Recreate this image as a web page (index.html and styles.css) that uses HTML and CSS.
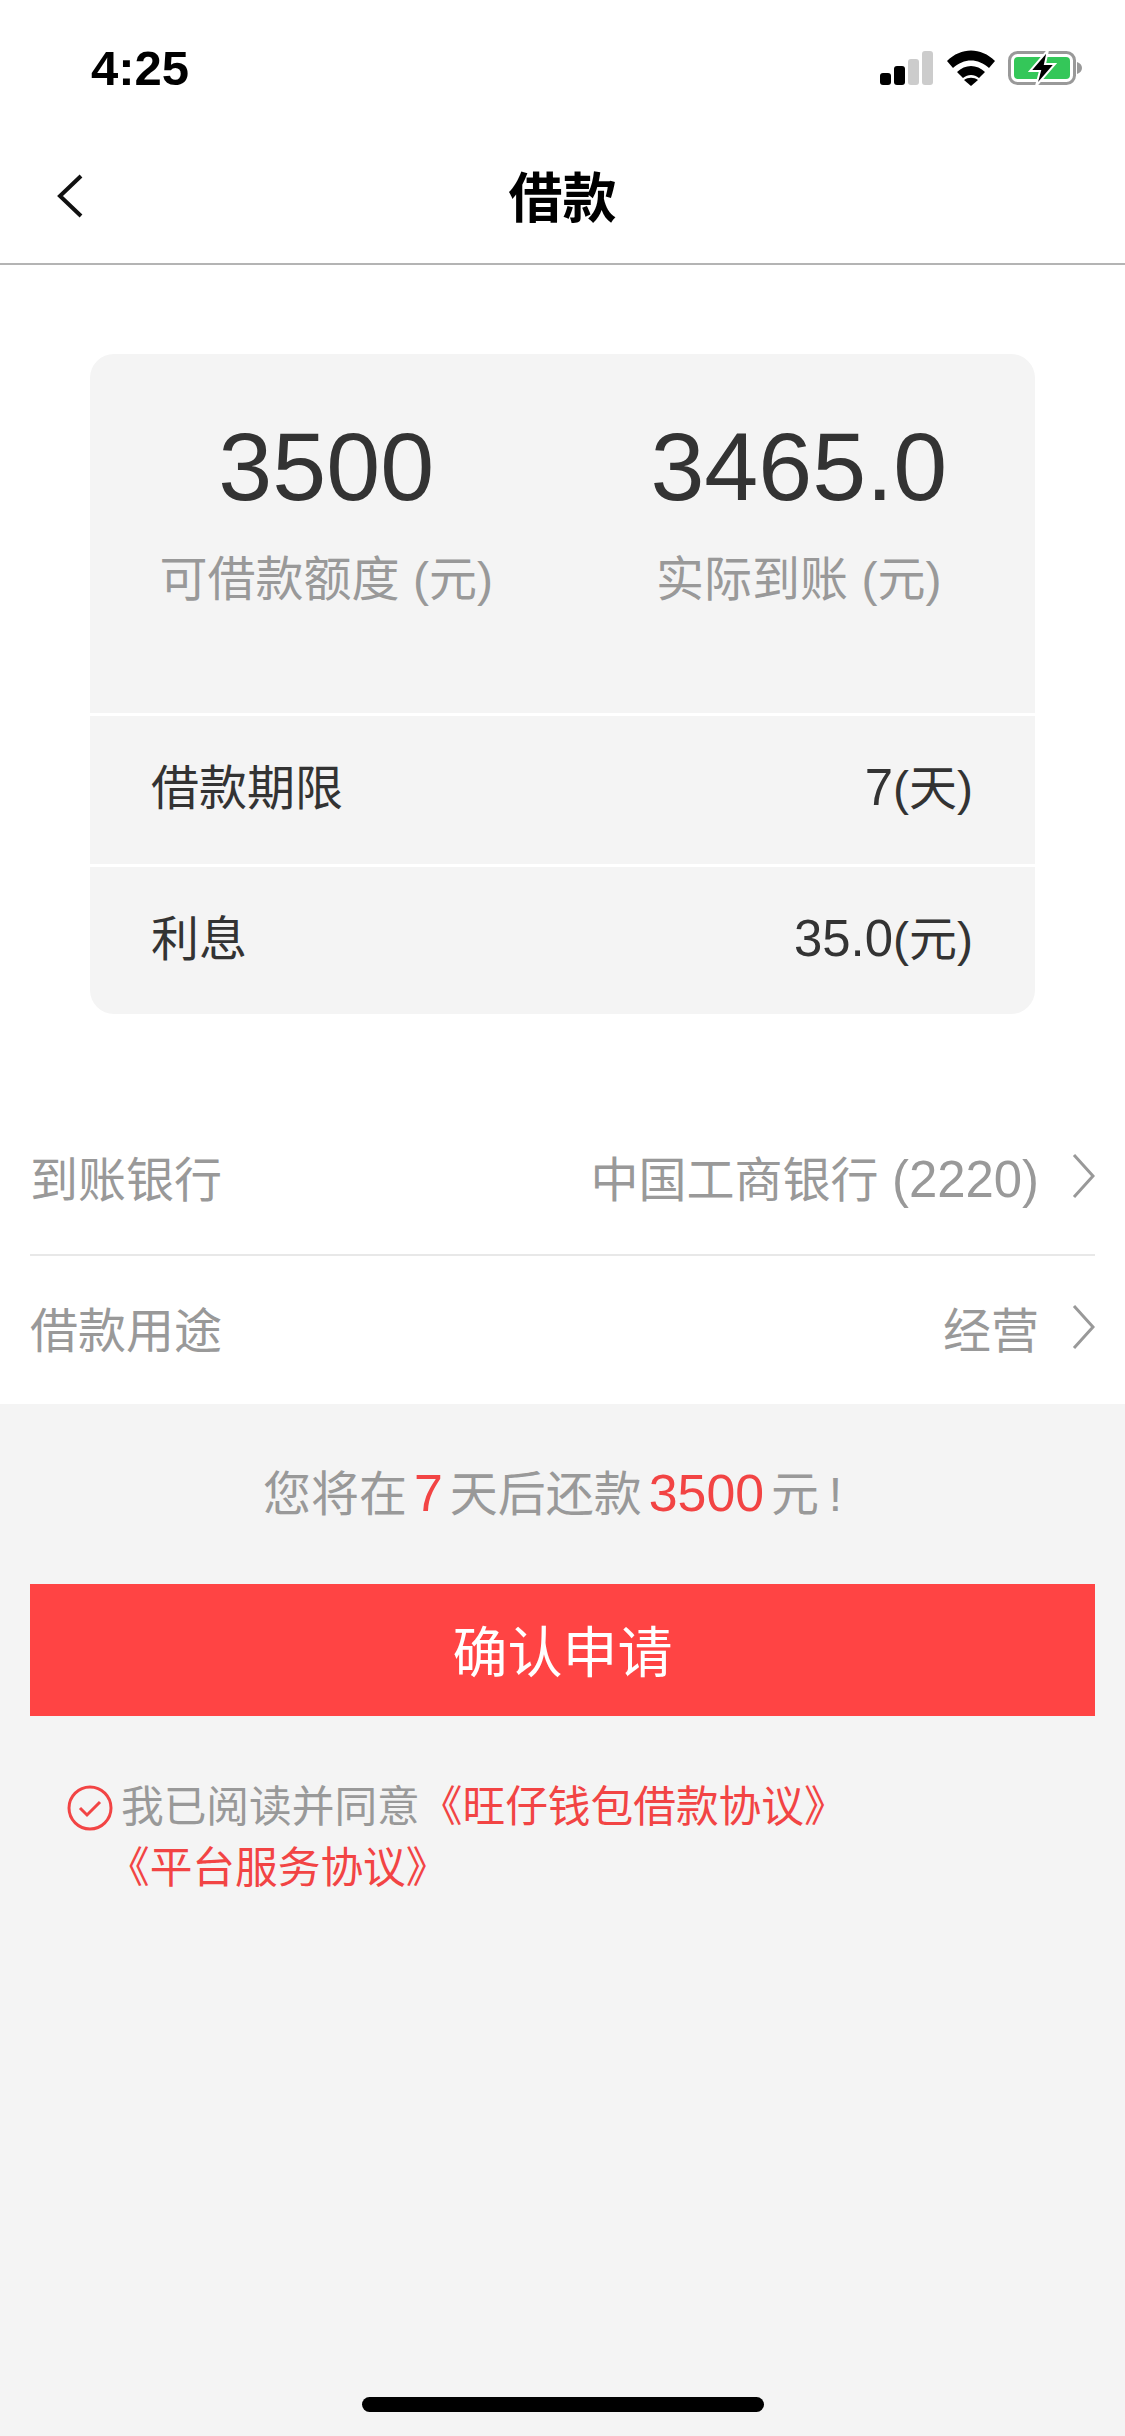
FILE: index.html
```html
<!DOCTYPE html>
<html lang="zh-CN">
<head>
    <meta charset="UTF-8">
    <meta name="viewport" content="width=device-width, initial-scale=1.0">
    <title>借款</title>
    <link rel="stylesheet" href="styles.css">
</head>
<body>

<div class="top">
    <div class="status-bar">
        <span class="time">4:25</span>
        <div class="status-icons">
            <svg class="signal" width="54" height="34" viewBox="0 0 54 34">
                <rect x="0" y="22" width="11" height="12" rx="3" fill="#000"/>
                <rect x="14" y="15" width="11" height="19" rx="3" fill="#000"/>
                <rect x="28" y="8" width="11" height="26" rx="3" fill="#ccc"/>
                <rect x="42" y="0" width="11" height="34" rx="3" fill="#ccc"/>
            </svg>
            <svg class="wifi" width="48" height="36" viewBox="0 0 48 36">
                <path d="M0 11 C14 -3 34 -3 48 11 L42 18 C31 8 17 8 6 18 Z" fill="#000"/>
                <path d="M10 22 C18 14 30 14 38 22 L32 28 C27 24 21 24 16 28 Z" fill="#000"/>
                <path d="M17 30 C21 27 27 27 31 30 L24 36 Z" fill="#000"/>
            </svg>
            <svg class="battery" width="74" height="36" viewBox="0 0 74 36">
                <rect x="1.5" y="2.5" width="65" height="31" rx="8" fill="none" stroke="#999" stroke-width="3"/>
                <rect x="6" y="7" width="56" height="22" rx="4" fill="#34c759"/>
                <path d="M69 12 C72 13 74 15 74 18 C74 21 72 23 69 24 Z" fill="#999"/>
                <path d="M40 0 L22 21 L32 21 L28 36 L47 14 L37 14 Z" fill="#000" stroke="#fff" stroke-width="2"/>
            </svg>
        </div>
    </div>
    <header class="nav">
        <svg class="back" width="28" height="44" viewBox="0 0 28 44">
            <path d="M25 2 L4 22 L25 42" fill="none" stroke="#111" stroke-width="4"/>
        </svg>
        <h1>借款</h1>
    </header>
</div>

<section class="panel">
    <div class="card">
        <div class="summary">
            <div class="stat">
                <div class="stat-num">3500</div>
                <div class="stat-label">可借款额度 (元)</div>
            </div>
            <div class="stat">
                <div class="stat-num">3465.0</div>
                <div class="stat-label">实际到账 (元)</div>
            </div>
        </div>
        <div class="card-row"><span>借款期限</span><span><span class="num">7</span>(天)</span></div>
        <div class="card-row"><span>利息</span><span><span class="num">35.0</span>(元)</span></div>
    </div>

    <div class="list">
        <div class="list-row">
            <span>到账银行</span>
            <span class="list-value">
                <span>中国工商银行 <span class="num">(2220)</span></span>
                <svg class="chevron" width="24" height="46" viewBox="0 0 24 46"><path d="M3 2 L22 23 L3 44" fill="none" stroke="#999" stroke-width="3"/></svg>
            </span>
        </div>
        <div class="list-row">
            <span>借款用途</span>
            <span class="list-value">
                <span>经营</span>
                <svg class="chevron" width="24" height="46" viewBox="0 0 24 46"><path d="M3 2 L22 23 L3 44" fill="none" stroke="#999" stroke-width="3"/></svg>
            </span>
        </div>
    </div>
</section>

<main class="apply">
    <p class="notice">您将在<em class="num">7</em>天后还款<em class="num">3500</em>元&#8201;!</p>
    <button class="confirm">确认申请</button>
    <div class="agree">
        <svg class="check" width="46" height="46" viewBox="0 0 46 46">
            <circle cx="23" cy="23" r="21" fill="none" stroke="#f24444" stroke-width="3"/>
            <path d="M13 23 L20 30 L33 17" fill="none" stroke="#f24444" stroke-width="3"/>
        </svg>
        <p>我已阅读并同意<a href="#">《旺仔钱包借款协议》</a><br><a class="second" href="#">《平台服务协议》</a></p>
    </div>
</main>

<div class="home-bar"></div>

</body>
</html>
```

FILE: styles.css
```css
body {
    font-family: "Liberation Sans", "Noto Sans CJK SC", sans-serif;
    margin: 0;
    width: 1125px;
    height: 2436px;
    background-color: #f4f4f4;
    color: #333;
    display: flex;
    flex-direction: column;
    position: relative;
    overflow: hidden;
}

.num {
    font-size: 1.06em;
}

.top {
    background-color: #fff;
    border-bottom: 2px solid #b4b4b4;
    height: 263px;
    flex-shrink: 0;
}

.status-bar {
    height: 132px;
    display: flex;
    justify-content: space-between;
    align-items: center;
    padding: 4px 43px 0 91px;
    box-sizing: border-box;
}

.time {
    font-size: 49px;
    font-weight: 700;
    color: #000;
}

.status-icons {
    display: flex;
    align-items: center;
    gap: 13px;
}

.nav {
    height: 131px;
    display: flex;
    align-items: center;
    justify-content: center;
    position: relative;
    padding-bottom: 7px;
    box-sizing: border-box;
}

.nav h1 {
    margin: 0;
    font-size: 54px;
    color: #000;
}

.back {
    position: absolute;
    left: 56px;
    top: 42px;
}

.panel {
    background-color: #fff;
    padding-top: 89px;
    height: 1139px;
    box-sizing: border-box;
    flex-shrink: 0;
}

.card {
    margin: 0 90px;
    background-color: #f4f4f4;
    border-radius: 24px;
    height: 660px;
    display: flex;
    flex-direction: column;
}

.summary {
    height: 359px;
    display: flex;
}

.stat {
    flex: 1;
    text-align: center;
    padding-top: 58px;
}

.stat-num {
    font-size: 97px;
    line-height: 110px;
}

.stat-label {
    font-size: 48px;
    line-height: 70px;
    margin-top: 23px;
    color: #999;
}

.card-row {
    flex: 1;
    display: flex;
    justify-content: space-between;
    align-items: center;
    padding: 0 62px 11px 61px;
    font-size: 48px;
    border-top: 3px solid #fff;
}

.list {
    margin: 0 30px;
    padding-top: 90px;
}

.list-row {
    height: 150px;
    display: flex;
    justify-content: space-between;
    align-items: center;
    padding-bottom: 7px;
    font-size: 48px;
    color: #999;
    box-sizing: border-box;
}

.list-row + .list-row {
    border-top: 2px solid #e8e8e8;
}

.list-value {
    display: flex;
    align-items: center;
}

.chevron {
    margin-left: 32px;
}

.apply {
    flex: 1;
    padding: 0 30px;
}

.notice {
    margin: 0;
    height: 178px;
    padding-right: 20px;
    margin-bottom: 2px;
    line-height: 178px;
    text-align: center;
    font-size: 48px;
    color: #999;
}

.notice em {
    font-style: normal;
    font-size: 1.08em;
    color: #f24444;
    margin: 0 7px;
}

.confirm {
    display: block;
    width: 100%;
    height: 132px;
    border: none;
    padding: 0 0 4px;
    background-color: #ff4444;
    color: #fff;
    font-family: inherit;
    font-size: 55px;
}

.agree {
    display: flex;
    padding: 61px 0 0 37px;
    font-size: 42.7px;
    line-height: 61px;
    color: #999;
}

.agree p {
    margin: 0 0 0 8px;
}

.agree a {
    color: #f24444;
    text-decoration: none;
}

.agree .second {
    margin-left: -14px;
}

.check {
    flex-shrink: 0;
    margin-top: 8px;
}

.home-bar {
    position: absolute;
    left: 362px;
    bottom: 24px;
    width: 402px;
    height: 15px;
    border-radius: 8px;
    background-color: #000;
}
```
